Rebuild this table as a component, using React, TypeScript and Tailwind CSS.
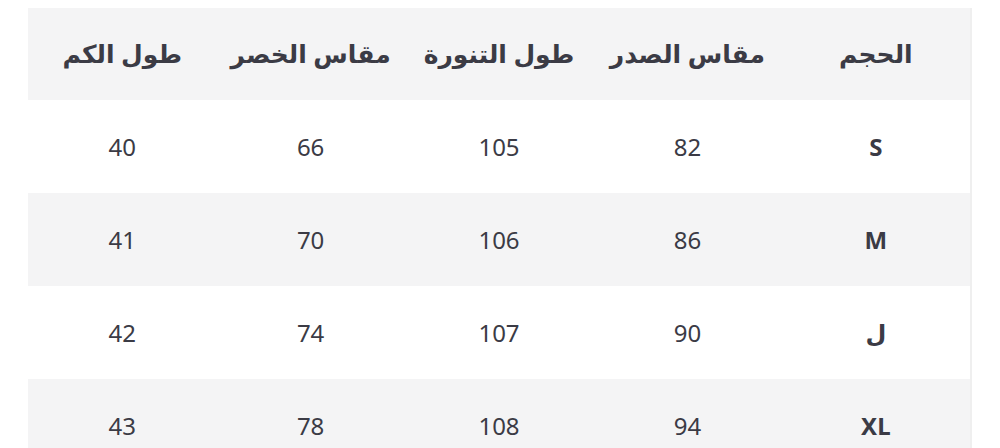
const headers = ['الحجم', 'مقاس الصدر', 'طول التنورة', 'مقاس الخصر', 'طول الكم'];

const rows = [
  ['S', '82', '105', '66', '40'],
  ['M', '86', '106', '70', '41'],
  ['L', '90', '107', '74', '42'],
  ['XL', '94', '108', '78', '43'],
];

export default function App() {
  return (
    <div className="h-[448px] w-[1000px] overflow-hidden bg-white pt-2 pl-7 pr-7 font-['Noto_Sans','DejaVu_Sans',sans-serif] text-[#3b3b45]">
      <div dir="rtl" className="border-r-2 border-[#efefef]">
        <div className="grid h-[92px] grid-cols-5 items-center bg-[#f4f4f5] text-[25px] font-bold">
          {headers.map((h) => (
            <div key={h} className="text-center">
              {h}
            </div>
          ))}
        </div>
        {rows.map((r, i) => (
          <div
            key={r[0]}
            className={`grid h-[93px] grid-cols-5 items-center text-[24px] ${i % 2 === 1 ? 'bg-[#f4f4f5]' : 'bg-white'}`}
          >
            {r.map((c, j) => (
              <div key={j} className={`text-center ${j === 0 ? 'font-bold' : 'font-normal'}`}>
                {j === 0 && c === 'L' ? 'ل' : c}
              </div>
            ))}
          </div>
        ))}
      </div>
    </div>
  );
}
